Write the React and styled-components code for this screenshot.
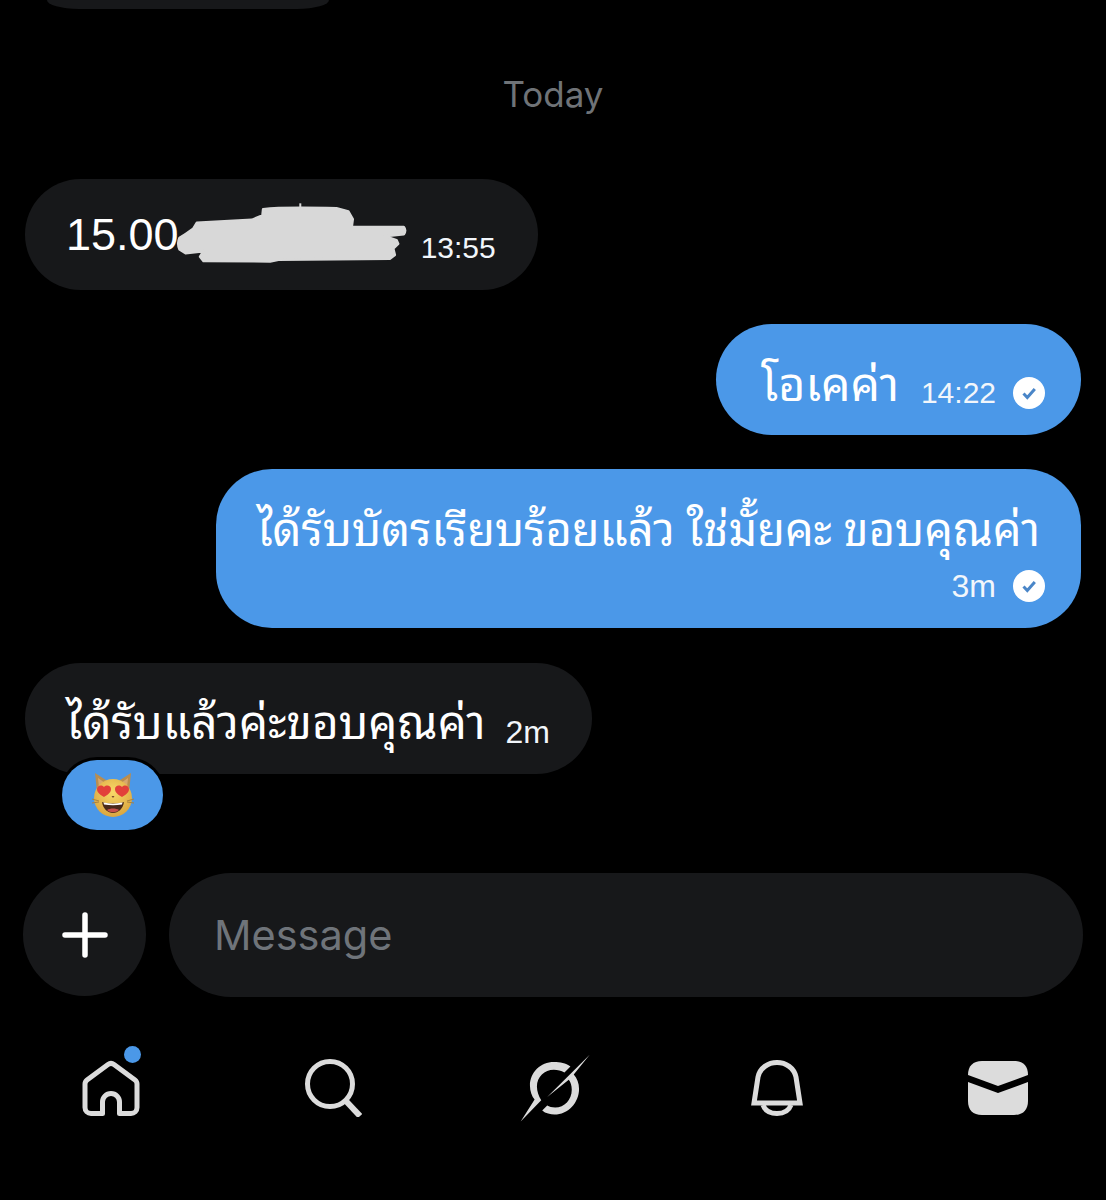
import styled, { createGlobalStyle } from 'styled-components';

const GlobalStyle = createGlobalStyle`
  html, body {
    margin: 0;
    background: #000;
  }
  body {
    font-family: "Liberation Sans", "Noto Sans Thai Looped", sans-serif;
    color: #fff;
  }
`;

const Scribble = () => (
  <ScribbleSvg viewBox="460 100 705 190" fill="#d8d8d8" stroke="#d8d8d8" strokeWidth="8" strokeLinejoin="round">
    <path d="M472 208Q490 198 514 180L524 163 690 154 722 141 724 122Q780 115 945 119L981 129 994 152 991 175 1148 176Q1156 186 1148 197L1091 203 1126 215 1131 226 1116 240 1121 260 1106 271 770 274 745 279 544 278 534 265 544 248 490 254 472 243Q464 225 472 208Z" />
    <path d="M833 104h6v12h-6z" strokeWidth="0" />
  </ScribbleSvg>
);

const ReadMark = () => (
  <svg width="32" height="32" viewBox="0 0 32 32">
    <circle cx="16" cy="16" r="16" fill="#fff" />
    <path d="M10.500 16.500l3.800 4 7.500-8.500" fill="none" stroke="#4a86c8" strokeWidth="3" />
  </svg>
);

const CatEmoji = () => (
  <svg width="42" height="46" viewBox="0 0 42 46">
    <defs>
      <radialGradient id="catFace" cx="50%" cy="35%" r="70%">
        <stop offset="0%" stopColor="#f8d868" />
        <stop offset="100%" stopColor="#d9a23c" />
      </radialGradient>
    </defs>
    <path d="M3 1l14 9-12 10zM39 1L25 10l12 10z" fill="#b98d4e" />
    <path d="M6 6l7 5-6 5zM36 6l-7 5 6 5z" fill="#d8a86c" />
    <ellipse cx="21" cy="26" rx="19" ry="19" fill="url(#catFace)" />
    <path d="M12 25c-3-2-7-4-7-8 0-3 4-5 7-2 3-3 7-1 7 2 0 4-4 6-7 8z" fill="#e2403a" />
    <path d="M30 25c-3-2-7-4-7-8 0-3 4-5 7-2 3-3 7-1 7 2 0 4-4 6-7 8z" fill="#e2403a" />
    <path d="M19.500 24h3l-1.500 2z" fill="#7a4a2a" />
    <path d="M10 30c6 2 16 2 22 0-1 7-6 11-11 11s-10-4-11-11z" fill="#4a2a1a" />
    <path d="M11.500 30.500c6 1.500 13 1.500 19 0l-.5 2c-6 1-12 1-18 0z" fill="#fff" />
    <path d="M15 38c3-2 9-2 12 0-3 3-9 3-12 0z" fill="#c9504a" />
    <path d="M0 27l7 2M0 31l7-1M42 27l-7 2M42 31l-7-1" stroke="#a9813f" strokeWidth="1" />
  </svg>
);

const PlusIcon = () => (
  <svg width="48" height="48" viewBox="0 0 48 48">
    <path d="M24 4v40M4 24h40" stroke="#fff" strokeWidth="5.500" strokeLinecap="round" />
  </svg>
);

const HomeIcon = () => (
  <svg width="58" height="56" viewBox="0 0 58 56" fill="none" stroke="#dcdcdc" strokeWidth="5">
    <path d="M20.500 53.500H9a6 6 0 0 1-6-6V24a5 5 0 0 1 2-4L26 4.500a5 5 0 0 1 6 0L53 20a5 5 0 0 1 2 4v23.500a6 6 0 0 1-6 6H37.500V42a8.500 8.500 0 0 0-17 0z" strokeLinejoin="round" />
  </svg>
);

const SearchIcon = () => (
  <svg width="58" height="58" viewBox="0 0 58 58" fill="none" stroke="#dcdcdc">
    <circle cx="26" cy="25" r="22.500" strokeWidth="5" />
    <path d="M41 41l15 16" strokeWidth="6" />
  </svg>
);

const ExploreIcon = () => (
  <svg width="73" height="70" viewBox="25 20 220 210" fill="#dcdcdc">
    <path d="M180 60C165 50 150 47 130 47 90 47 58 78 58 118 58 135 64 150 72 160L30 226 92 162C84 150 79 135 79 120 79 92 102 70 130 70 142 70 152 73 162 78Z" />
    <path d="M238 25L110 152 175 100C181 108 184 118 184 130 184 160 162 184 134 184 124 184 116 182 110 178L95 193C105 202 120 205 132 205 172 205 206 170 206 128 206 110 200 95 190 84Z" />
  </svg>
);

const BellIcon = () => (
  <svg width="52" height="56" viewBox="0 0 52 56" fill="none" stroke="#dcdcdc" strokeWidth="5">
    <path d="M3 43h46L45 17C43 8 35 2.500 26 2.500S9 8 7 17z" />
    <path d="M12 45c2 5.500 7.500 8.500 14 8.500S38 50.500 40 45" />
  </svg>
);

const MailIcon = () => (
  <MailSvg viewBox="0 0 60 54" fill="#dcdcdc">
    <path d="M0 14C0 5 5 0 14 0h32c9 0 14 5 14 14L30 25 0 14z" />
    <path d="M0 21l30 11 30-11v19c0 9-5 14-14 14H14C5 54 0 49 0 40z" />
  </MailSvg>
);

export default function App() {
  return (
    <>
      <GlobalStyle />
      <Page>
        <Thread>
          <ClippedBubble />
          <DayLabel>Today</DayLabel>

          <Bubble>
            <BigText>15.00</BigText>
            <Scribble />
            <Time $gap={11}>13:55</Time>
          </Bubble>

          <Bubble $mine>
            <ThaiText $size={46.4}>โอเคค่า</ThaiText>
            <Time $gap={22}>14:22</Time>
            <Mark><ReadMark /></Mark>
          </Bubble>

          <TallBubble>
            <ThaiText $size={45.2}>ได้รับบัตรเรียบร้อยแล้ว ใช่มั้ยคะ ขอบคุณค่า</ThaiText>
            <TallMeta>
              <Time $size={32}>3m</Time>
              <Mark><ReadMark /></Mark>
            </TallMeta>
          </TallBubble>

          <ReactedRow>
            <Bubble>
              <ThaiText $size={45.8}>ได้รับแล้วค่ะขอบคุณค่า</ThaiText>
              <Time $gap={20} $size={32}>2m</Time>
            </Bubble>
            <Reaction><CatEmoji /></Reaction>
          </ReactedRow>
        </Thread>

        <Composer>
          <AddButton><PlusIcon /></AddButton>
          <MessageInput>Message</MessageInput>
        </Composer>

        <TabBar>
          <Tab>
            <HomeIcon />
            <UnreadDot />
          </Tab>
          <Tab><SearchIcon /></Tab>
          <Tab><ExploreIcon /></Tab>
          <Tab><BellIcon /></Tab>
          <Tab><MailIcon /></Tab>
        </TabBar>
      </Page>
    </>
  );
}

const Page = styled.div`
  width: 1106px;
  height: 1200px;
  overflow: hidden;
  display: flex;
  flex-direction: column;
  background: #000;
`;

const Thread = styled.div`
  height: 773px;
  padding: 0 25px;
  display: flex;
  flex-direction: column;
  align-items: flex-start;
`;

const ClippedBubble = styled.div`
  width: 282px;
  height: 9px;
  flex-shrink: 0;
  margin-left: 22px;
  background: #17181a;
  border-radius: 0 0 32px 32px / 0 0 9px 9px;
`;

const DayLabel = styled.div`
  align-self: center;
  height: 40px;
  flex-shrink: 0;
  margin-top: 65px;
  margin-bottom: 65px;
  font-family: "Inter", sans-serif;
  font-size: 35px;
  line-height: 40px;
  color: #6f7377;
`;

const Bubble = styled.div`
  height: 111px;
  box-sizing: border-box;
  display: flex;
  align-items: center;
  flex-shrink: 0;
  border-radius: 56px;
  margin-bottom: 34px;
  background: ${({ $mine }) => ($mine ? '#4b98e8' : '#17181a')};
  align-self: ${({ $mine }) => ($mine ? 'flex-end' : 'flex-start')};
  padding-right: ${({ $mine }) => ($mine ? '36px' : '42px')};
  padding-left: ${({ $mine }) => ($mine ? '45px' : '41px')};
`;

const TallBubble = styled.div`
  height: 159px;
  padding: 30px 41px 0;
  box-sizing: border-box;
  align-self: flex-end;
  flex-shrink: 0;
  border-radius: 56px;
  margin-bottom: 35px;
  background: #4b98e8;
`;

const TallMeta = styled.div`
  display: flex;
  justify-content: flex-end;
  align-items: center;
  margin-top: -10px;
  margin-right: -5px;
`;

const BigText = styled.span`
  font-size: 45px;
  line-height: 50px;
`;

const ThaiText = styled.span`
  display: block;
  font-family: "Noto Sans Thai Looped", "Liberation Sans", sans-serif;
  font-size: ${({ $size }) => $size}px;
  line-height: 54px;
  white-space: nowrap;
`;

const ScribbleSvg = styled.svg`
  width: 235px;
  height: 63px;
  margin-left: -4px;
  margin-top: -2px;
`;

const Time = styled.span`
  font-size: ${({ $size }) => $size || 30}px;
  line-height: 34px;
  margin-left: ${({ $gap }) => $gap || 0}px;
  margin-top: 26px;
  color: #f2f6fb;
`;

const Mark = styled.span`
  display: flex;
  margin-left: 17px;
  margin-top: 26px;
`;

const ReactedRow = styled.div`
  position: relative;
`;

const Reaction = styled.div`
  position: absolute;
  left: 37px;
  top: 97px;
  width: 101px;
  height: 70px;
  display: flex;
  align-items: center;
  justify-content: center;
  border-radius: 35px;
  background: #4b98e8;
  box-shadow: 0 0 0 3px #000;
`;

const Composer = styled.div`
  margin-top: 100px;
  padding: 0 23px;
  display: flex;
  gap: 23px;
`;

const AddButton = styled.div`
  width: 123px;
  height: 123px;
  flex-shrink: 0;
  border-radius: 50%;
  background: #17181a;
  display: flex;
  align-items: center;
  justify-content: center;
`;

const MessageInput = styled.div`
  flex: 1;
  height: 124px;
  padding-left: 45px;
  border-radius: 62px;
  background: #17181a;
  display: flex;
  align-items: center;
  font-family: "Inter", sans-serif;
  font-size: 41.500px;
  color: #6f747a;
`;

const TabBar = styled.div`
  margin-top: 57px;
  display: grid;
  grid-template-columns: repeat(5, 222px);
`;

const Tab = styled.div`
  position: relative;
  height: 68px;
  display: flex;
  align-items: center;
  justify-content: center;
`;

const MailSvg = styled.svg`
  width: 60px;
  height: 54px;
  margin-right: 3px;
`;

const UnreadDot = styled.span`
  position: absolute;
  left: 124px;
  top: -8px;
  width: 17px;
  height: 17px;
  border-radius: 50%;
  background: #4b98e8;
`;
